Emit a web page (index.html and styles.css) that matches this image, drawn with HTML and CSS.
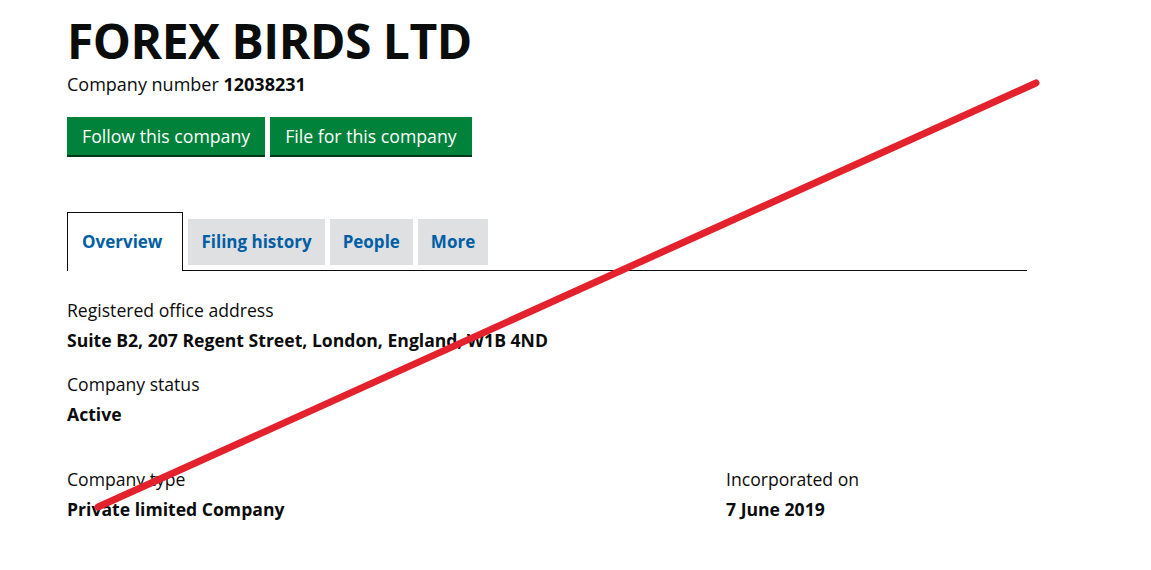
FILE: index.html
```html
<!DOCTYPE html>
<html>

<head>
  <title>FOREX BIRDS LTD - Overview</title>
  <meta charset="utf-8" />
  <link rel="stylesheet" href="styles.css">
</head>

<body>
  <div class="page">
    <h1 class="heading">FOREX BIRDS LTD</h1>
    <p class="company-number">Company number <strong>12038231</strong></p>
    <div class="actions">
      <a class="button" href="#">Follow this company</a>
      <a class="button" href="#">File for this company</a>
    </div>
    <ul class="tabs">
      <li class="tab active"><a href="#">Overview</a></li>
      <li class="tab"><a href="#">Filing history</a></li>
      <li class="tab"><a href="#">People</a></li>
      <li class="tab"><a href="#">More</a></li>
    </ul>
    <dl class="field">
      <dt>Registered office address</dt>
      <dd>Suite B2, 207 Regent Street, London, England, W1B 4ND</dd>
    </dl>
    <dl class="field">
      <dt>Company status</dt>
      <dd>Active</dd>
    </dl>
    <div class="grid">
      <dl class="field">
        <dt>Company type</dt>
        <dd>Private limited Company</dd>
      </dl>
      <dl class="field">
        <dt>Incorporated on</dt>
        <dd>7 June 2019</dd>
      </dl>
    </div>
  </div>
  <svg class="strike" width="1151" height="570" viewBox="0 0 1151 570">
    <line x1="98" y1="507" x2="1036" y2="83" stroke="#e3222d" stroke-width="7" stroke-linecap="round" />
  </svg>
</body>

</html>
```
FILE: styles.css
```css
body {
  margin: 0;
  padding: 0;
  background: #fff;
  color: #0b0c0c;
  font-family: 'Open Sans', sans-serif;
}
.page {
  width: 960px;
  padding: 14px 0 0 67px;
}
.heading {
  margin: 0;
  font-size: 48px;
  line-height: 54px;
  font-weight: 700;
  letter-spacing: -0.5px;
}
.company-number {
  margin: 3px 0 0;
  font-size: 18px;
  line-height: 26px;
}
.actions {
  display: flex;
  gap: 5px;
  margin-top: 20px;
}
.button {
  display: block;
  background: #00823b;
  color: #fff;
  text-decoration: none;
  font-size: 17.7px;
  line-height: 38px;
  padding: 0 15px;
  box-shadow: 0 2px 0 #003618;
}
.tabs {
  list-style: none;
  margin: 57px 0 27px;
  padding: 0;
  display: flex;
  align-items: flex-end;
  gap: 5px;
  border-bottom: 1px solid #0b0c0c;
}
.tab {
  background: #dee0e2;
  margin-bottom: 5px;
}
.tab a {
  display: block;
  padding: 0 13px;
  line-height: 46px;
  color: #005ea5;
  font-weight: 700;
  font-size: 17px;
  text-decoration: none;
}
.tab.active {
  background: #fff;
  border: 1px solid #0b0c0c;
  border-bottom: 0;
  margin-bottom: -1px;
}
.tab.active a {
  padding: 0 20px 0 14px;
  line-height: 58px;
}
.field {
  margin: 0;
  font-size: 17.6px;
}
.field dt {
  margin-top: 20px;
  line-height: 24px;
}
.field dd {
  margin: 6px 0 0;
  line-height: 24px;
  font-weight: 700;
}
.grid {
  display: grid;
  grid-template-columns: 659px 1fr;
  margin-top: 21px;
}
.strike {
  position: absolute;
  top: 0;
  left: 0;
}
```
